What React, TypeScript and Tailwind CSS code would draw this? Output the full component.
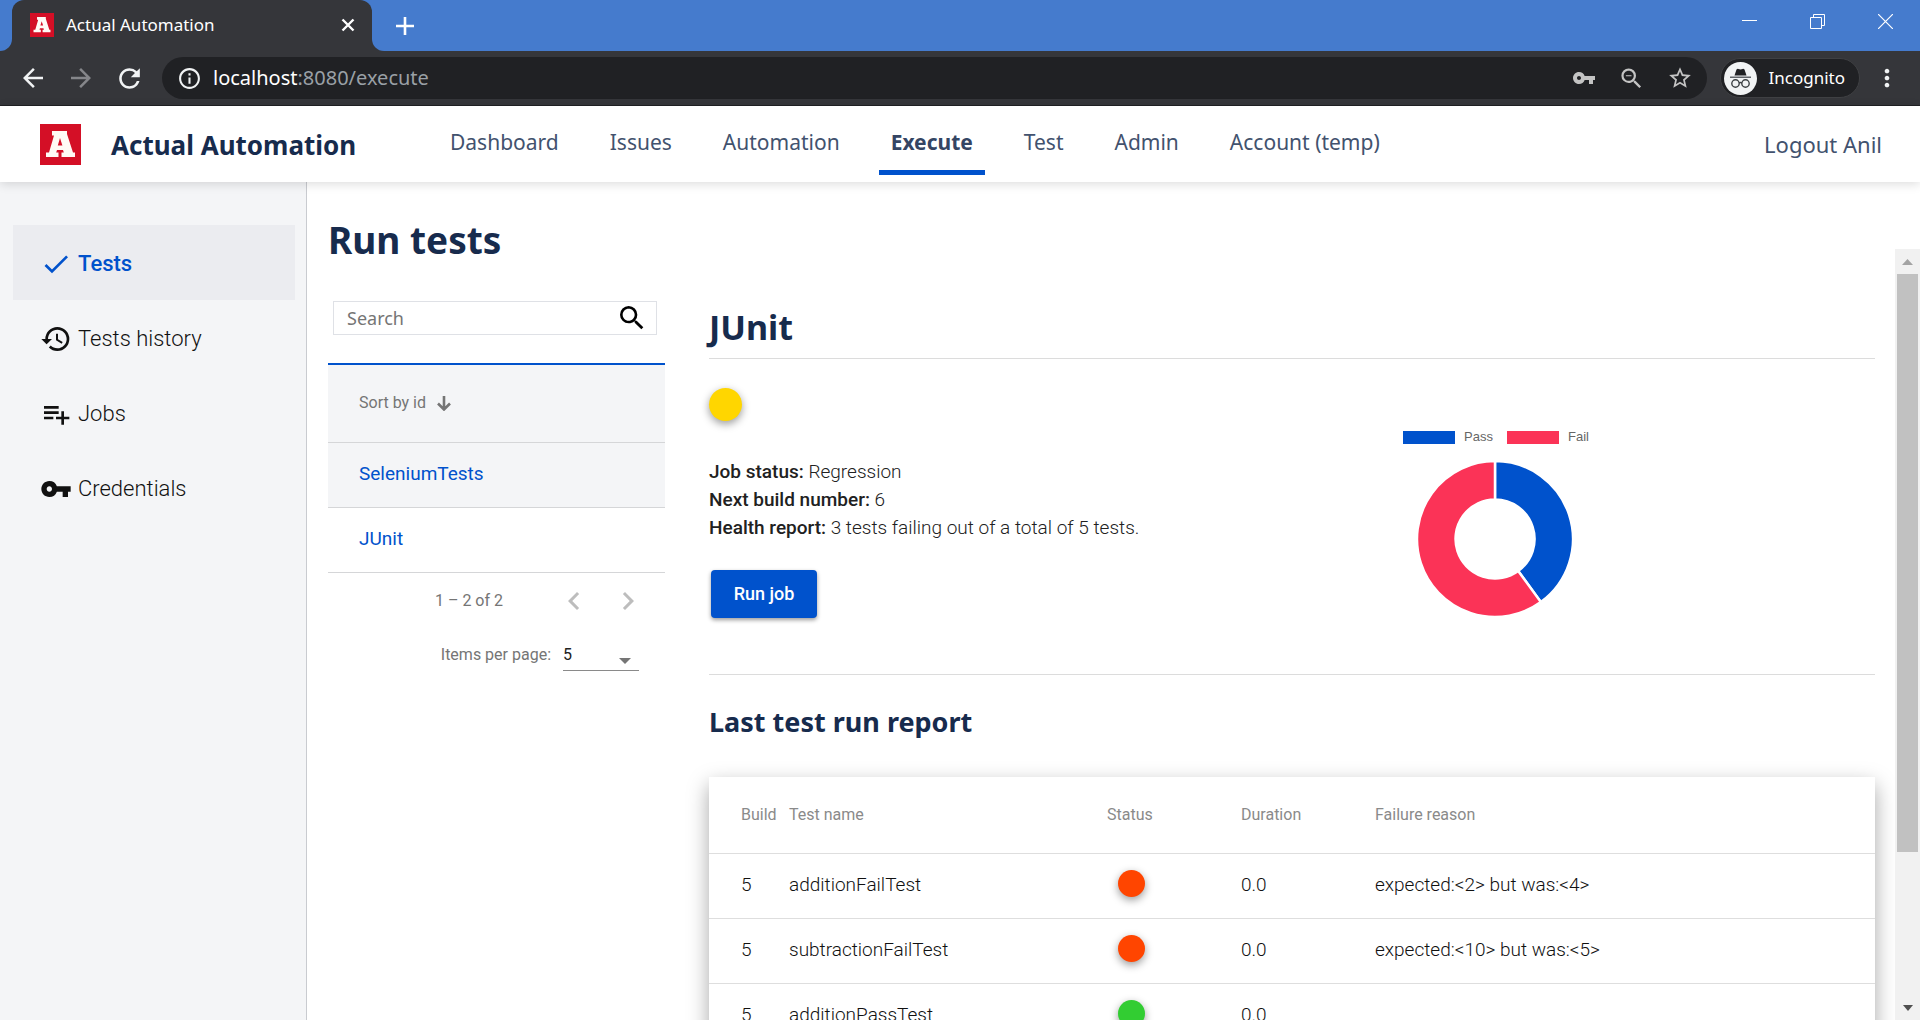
import React from 'react';
import {
  MdArrowBack,
  MdArrowForward,
  MdCheck,
  MdChevronLeft,
  MdChevronRight,
  MdHistory,
  MdInfoOutline,
  MdMoreVert,
  MdPlaylistAdd,
  MdRefresh,
  MdSearch,
  MdStarBorder,
  MdVpnKey,
  MdZoomOut,
} from 'react-icons/md';

const navLinks = ['Dashboard', 'Issues', 'Automation', 'Execute', 'Test', 'Admin', 'Account (temp)'];

const sideLinks = [
  { label: 'Tests', icon: MdCheck },
  { label: 'Tests history', icon: MdHistory },
  { label: 'Jobs', icon: MdPlaylistAdd },
  { label: 'Credentials', icon: MdVpnKey },
];

const report = [
  { build: 5, name: 'additionFailTest', pass: false, duration: '0.0', reason: 'expected:<2> but was:<4>' },
  { build: 5, name: 'subtractionFailTest', pass: false, duration: '0.0', reason: 'expected:<10> but was:<5>' },
  { build: 5, name: 'additionPassTest', pass: true, duration: '0.0', reason: '' },
];

function Logo({ className }: { className: string }) {
  return (
    <svg viewBox="0 0 41 41" className={className} aria-hidden="true">
      <rect width="41" height="41" fill="#d40f26" />
      <path
        fill="#fffaf5"
        fillRule="evenodd"
        d="M12 7h15v3l6 18.500h2V33H21.500v-4.500h2.300L23 26h-6l-.8 2.500h2.300V33H6v-4.500h3l5-17H12zM20 14l-2.200 7.500h4.600z"
      />
    </svg>
  );
}

function BrowserChrome() {
  return (
    <header className="shrink-0">
      <div className="flex h-[51px] bg-[#457bcd]">
        <div className="flex w-3 bg-[#35363a]">
          <div className="w-full rounded-br-xl bg-[#457bcd]" />
        </div>
        <div className="flex w-[360px] items-center rounded-t-xl bg-[#35363a] pb-px pl-[18px] pr-4">
          <Logo className="h-6 w-6" />
          <span className="ml-3 flex-1 font-['Noto_Sans'] text-[17px] text-white">Actual Automation</span>
          <button aria-label="Close tab">
            <svg viewBox="0 0 16 16" className="h-4 w-4" stroke="#fff" strokeWidth="2.400">
              <path d="M2.500 2.500l11 11M13.500 2.500l-11 11" />
            </svg>
          </button>
        </div>
        <div className="flex w-3 bg-[#35363a]">
          <div className="w-full rounded-bl-xl bg-[#457bcd]" />
        </div>
        <button aria-label="New tab" className="ml-3 self-center">
          <svg viewBox="0 0 18 18" className="h-[18px] w-[18px]" stroke="#fff" strokeWidth="2.600">
            <path d="M9 0v18M0 9h18" />
          </svg>
        </button>
        <div className="ml-auto flex items-center gap-[53px] pb-2 pr-[27px]">
          <button aria-label="Minimize">
            <svg viewBox="0 0 15 15" className="h-[15px] w-[15px]" stroke="#fff">
              <path d="M0 6.500h15" />
            </svg>
          </button>
          <button aria-label="Restore">
            <svg viewBox="0 0 15 15" className="h-[15px] w-[15px]" stroke="#fff" fill="none">
              <path d="M.5 3.500h11v11h-11zM3.500 3.500v-3h11v11h-3" />
            </svg>
          </button>
          <button aria-label="Close">
            <svg viewBox="0 0 15 15" className="h-[15px] w-[15px]" stroke="#fff" strokeWidth="1.200">
              <path d="M0 0l15 15M15 0L0 15" />
            </svg>
          </button>
        </div>
      </div>
      <div className="flex h-[55px] items-center border-b border-[#202124] bg-[#35363a] text-[#f1f3f4]">
        <button aria-label="Back" className="ml-[18px]">
          <MdArrowBack size={30} />
        </button>
        <button aria-label="Forward" className="ml-[18px] text-[#85868a]">
          <MdArrowForward size={30} />
        </button>
        <button aria-label="Reload" className="ml-[18px]">
          <MdRefresh size={31} />
        </button>
        <div className="ml-[17px] flex h-[42px] flex-1 items-center rounded-full bg-[#202124] pl-[15px] pr-[14px]">
          <MdInfoOutline size={25} />
          <div className="ml-[11px] flex-1 font-['Noto_Sans'] text-xl text-[#9aa0a6]">
            <span className="text-white">localhost</span>:8080/execute
          </div>
          <div className="flex items-center gap-[22px] text-[#c4c4c4]">
            <MdVpnKey size={24} />
            <MdZoomOut size={27} />
            <MdStarBorder size={26} />
          </div>
        </div>
        <div className="ml-[13px] flex h-10 items-center rounded-full border border-[#3f4043] bg-[#202124] pl-[3px] pr-[14px]">
          <svg viewBox="0 0 33 33" className="h-[33px] w-[33px]">
            <circle cx="16.500" cy="16.500" r="16.500" fill="#f1f3f4" />
            <path fill="#202124" d="M12.500 7.500q1-1 2-.5l2 .5 2-.5q1-.5 2 .5l2 6h-12z" />
            <path fill="#5f6368" d="M6 14.500h21v1.500H6z" />
            <g fill="none" stroke="#3c4043" strokeWidth="1.400">
              <circle cx="11.500" cy="21.500" r="3.700" />
              <circle cx="21.500" cy="21.500" r="3.700" />
              <path d="M15 21q1.500-1 3 0" />
            </g>
          </svg>
          <span className="ml-3 font-['Noto_Sans'] text-[17px] text-white">Incognito</span>
        </div>
        <button aria-label="Menu" className="ml-[13px] mr-[19px]">
          <MdMoreVert size={28} />
        </button>
      </div>
    </header>
  );
}

function TopNav() {
  return (
    <div className="relative z-10 flex h-[76px] shrink-0 items-center bg-white pl-10 pr-[38px] font-['Noto_Sans'] shadow-[0_2px_10px_rgba(0,0,0,0.14)]">
      <Logo className="h-[41px] w-[41px]" />
      <span className="ml-[30px] w-[327px] pt-[2px] text-[26px] font-bold text-[#172b4d]">Actual Automation</span>
      <nav className="flex h-full gap-[27px] text-[21px] text-[#42526e]">
        {navLinks.map((label) => (
          <a
            key={label}
            href="#"
            className={
              label === 'Execute'
                ? 'h-[69px] border-b-5 border-[#0052cc] px-3 pt-[21px] font-bold text-[#344563]'
                : 'h-[69px] px-3 pt-[21px]'
            }
          >
            {label}
          </a>
        ))}
      </nav>
      <a href="#" className="ml-auto text-[22px] text-[#42526e]">Logout Anil</a>
    </div>
  );
}

function Sidebar() {
  return (
    <aside className="w-[307px] shrink-0 border-r border-[#c9cbd0] bg-[#f4f5f7] pl-[13px] pr-[11px] pt-[43px]">
      {sideLinks.map(({ label, icon: Icon }, i) => (
        <a
          key={label}
          href="#"
          className={
            i === 0
              ? 'flex h-[75px] items-center gap-[6px] bg-[#ebecf0] pl-[27px] pt-[2px] text-[22px] font-medium text-[#0052cc]'
              : 'flex h-[75px] items-center gap-[6px] pl-[27px] pt-[2px] text-[22px] font-light text-[#111111]'
          }
        >
          <Icon size={32} />
          {label}
        </a>
      ))}
    </aside>
  );
}

function JobList() {
  return (
    <div className="w-[337px] shrink-0">
      <div className="ml-[5px] mr-2 flex h-[34px] items-center border border-[#dfe1e6] pl-[13px] pr-2">
        <input
          type="text"
          aria-label="Search"
          placeholder="Search"
          className="min-w-0 flex-1 font-['Noto_Sans'] text-lg outline-none placeholder:text-[#757575]"
        />
        <button aria-label="Search jobs">
          <MdSearch size={32} />
        </button>
      </div>
      <table className="mt-7 w-full border-t-2 border-[#0052cc] text-left">
        <thead>
          <tr className="h-[78px] border-b border-[#d5d6d8] bg-[#f4f5f7]">
            <th className="pl-[31px] text-base font-normal text-[#757575]">
              <span className="flex items-center gap-[11px]">
                Sort by id
                <svg viewBox="0 0 14 15" className="h-[15px] w-[14px]" fill="none" stroke="#757575" strokeWidth="2.600">
                  <path d="M7 0v13M1 7.500l6 6 6-6" />
                </svg>
              </span>
            </th>
          </tr>
        </thead>
        <tbody className="text-[19px] text-[#0052cc]">
          <tr className="h-[65px] border-b border-[#d5d6d8] bg-[#f4f5f7]">
            <td className="pl-[31px]"><a href="#">SeleniumTests</a></td>
          </tr>
          <tr className="h-[65px] border-b border-[#d5d6d8]">
            <td className="pl-[31px]"><a href="#">JUnit</a></td>
          </tr>
        </tbody>
      </table>
      <div className="flex h-14 items-center justify-end pr-[19px] text-base text-[#757575]">
        <span className="mr-[53px]">1 – 2 of 2</span>
        <button aria-label="Previous page" className="mr-[18px] text-[#bdbdbd]">
          <MdChevronLeft size={36} />
        </button>
        <button aria-label="Next page" className="text-[#bdbdbd]">
          <MdChevronRight size={36} />
        </button>
      </div>
      <div className="flex h-[42px] items-end justify-end pr-[26px] text-base text-[#757575]">
        <label htmlFor="page-size" className="mr-3 pb-1">Items per page:</label>
        <div className="relative w-[76px] border-b border-[#8a8a8a]">
          <select id="page-size" defaultValue="5" className="h-[30px] w-full appearance-none text-[#212121] outline-none">
            <option>5</option>
            <option>10</option>
            <option>25</option>
          </select>
          <svg viewBox="0 0 12 6" className="pointer-events-none absolute bottom-[6px] right-2 h-[6px] w-3" fill="#757575">
            <path d="M0 0h12L6 6z" />
          </svg>
        </div>
      </div>
    </div>
  );
}

function ResultChart() {
  return (
    <div className="flex w-[184px] flex-col items-center">
      <div className="flex h-[14px] w-full items-center font-['Liberation_Sans',sans-serif] text-[13px] leading-[14px] text-[#666]">
        <span className="h-[13px] w-[52px] shrink-0 bg-[#0052cc]" />
        <span className="ml-[9px] w-[43px] shrink-0">Pass</span>
        <span className="h-[13px] w-[52px] shrink-0 bg-[#fb3357]" />
        <span className="ml-[9px] shrink-0">Fail</span>
      </div>
      <svg viewBox="-78 -78 156 156" className="mt-[17px] h-[156px] w-[156px]" stroke="#fff" strokeWidth="2.500">
        <path fill="#0052cc" d="M0-78A78 78 0 0 1 45.850 63.100L23.200 32A39.500 39.500 0 0 0 0-39.500z" />
        <path fill="#fb3357" d="M45.850 63.100A78 78 0 1 1 0-78V-39.500A39.500 39.500 0 1 0 23.200 32z" />
      </svg>
    </div>
  );
}

function ReportTable() {
  return (
    <div className="mt-9 bg-white pb-16 shadow-[0_8px_20px_rgba(0,0,0,0.35)]">
      <table className="w-full table-fixed text-left text-[#212121]">
        <thead>
          <tr className="h-[76px] border-b border-[#dedede] text-base text-[#8a8a8a]">
            <th className="w-[80px] pl-8 font-normal">Build</th>
            <th className="w-[318px] font-normal">Test name</th>
            <th className="w-[134px] font-normal">Status</th>
            <th className="w-[134px] font-normal">Duration</th>
            <th className="font-normal">Failure reason</th>
          </tr>
        </thead>
        <tbody className="text-[19px] font-light text-[#111111]">
          {report.map((row) => (
            <tr key={row.name} className="h-[65px] border-b border-[#dedede]">
              <td className="pl-8">{row.build}</td>
              <td>{row.name}</td>
              <td className="pl-[11px]">
                <div
                  className={
                    row.pass
                      ? 'mb-1 h-[27px] w-[27px] rounded-full bg-[#32cd32] shadow-[0_3px_8px_rgba(0,0,0,0.4)]'
                      : 'mb-1 h-[27px] w-[27px] rounded-full bg-[#ff4500] shadow-[0_3px_8px_rgba(0,0,0,0.4)]'
                  }
                />
              </td>
              <td>{row.duration}</td>
              <td>{row.reason}</td>
            </tr>
          ))}
        </tbody>
      </table>
    </div>
  );
}

function JobDetails() {
  return (
    <section className="min-w-0 flex-1 pt-1">
      <h2 className="border-b border-[#dcdcdc] pb-2 font-['Noto_Sans'] text-[34px] font-bold leading-[45px] text-[#172b4d]">JUnit</h2>
      <div className="flex justify-between pr-[288px] pt-[29px]">
        <div className="h-[286px]">
          <div className="h-[33px] w-[33px] rounded-full bg-[#ffd600] shadow-[0_3px_8px_rgba(0,0,0,0.4)]" />
          <div className="mt-[37px] text-[19px] font-light leading-7 text-[#212121]">
            <p><b className="font-medium">Job status:</b> Regression</p>
            <p><b className="font-medium">Next build number:</b> 6</p>
            <p><b className="font-medium">Health report:</b> 3 tests failing out of a total of 5 tests.</p>
          </div>
          <button className="ml-[2px] mt-7 h-12 w-[106px] rounded bg-[#0052cc] text-lg font-medium text-white shadow-[0_2px_4px_rgba(0,0,0,0.4)]">
            Run job
          </button>
        </div>
        <div className="pt-[42px]">
          <ResultChart />
        </div>
      </div>
      <h3 className="border-t border-[#dcdcdc] pt-7 font-['Noto_Sans'] text-[27px] font-bold leading-[38px] text-[#172b4d]">
        Last test run report
      </h3>
      <ReportTable />
    </section>
  );
}

function Scrollbar() {
  return (
    <div className="mt-[67px] flex w-[25px] shrink-0 flex-col items-center bg-[#f1f1f1]">
      <svg viewBox="0 0 25 25" className="h-[25px] w-[25px] shrink-0" fill="#a3a3a3">
        <path d="M7 16h11l-5.500-6z" />
      </svg>
      <div className="h-3/4 w-[21px] bg-[#c1c1c1]" />
      <svg viewBox="0 0 25 25" className="mt-auto h-[25px] w-[25px] shrink-0" fill="#505050">
        <path d="M8 10h10l-5 6z" />
      </svg>
    </div>
  );
}

export default function App() {
  return (
    <div className="flex h-screen flex-col overflow-hidden bg-white font-['Roboto',sans-serif]">
      <BrowserChrome />
      <TopNav />
      <div className="flex min-h-0 flex-1">
        <Sidebar />
        <main className="min-w-0 flex-1 overflow-hidden pl-[21px] pr-5">
          <h1 className="pt-[30px] font-['Noto_Sans'] text-[37px] font-bold leading-[56px] text-[#172b4d]">Run tests</h1>
          <div className="mt-[33px] flex gap-11">
            <JobList />
            <JobDetails />
          </div>
        </main>
        <Scrollbar />
      </div>
    </div>
  );
}
